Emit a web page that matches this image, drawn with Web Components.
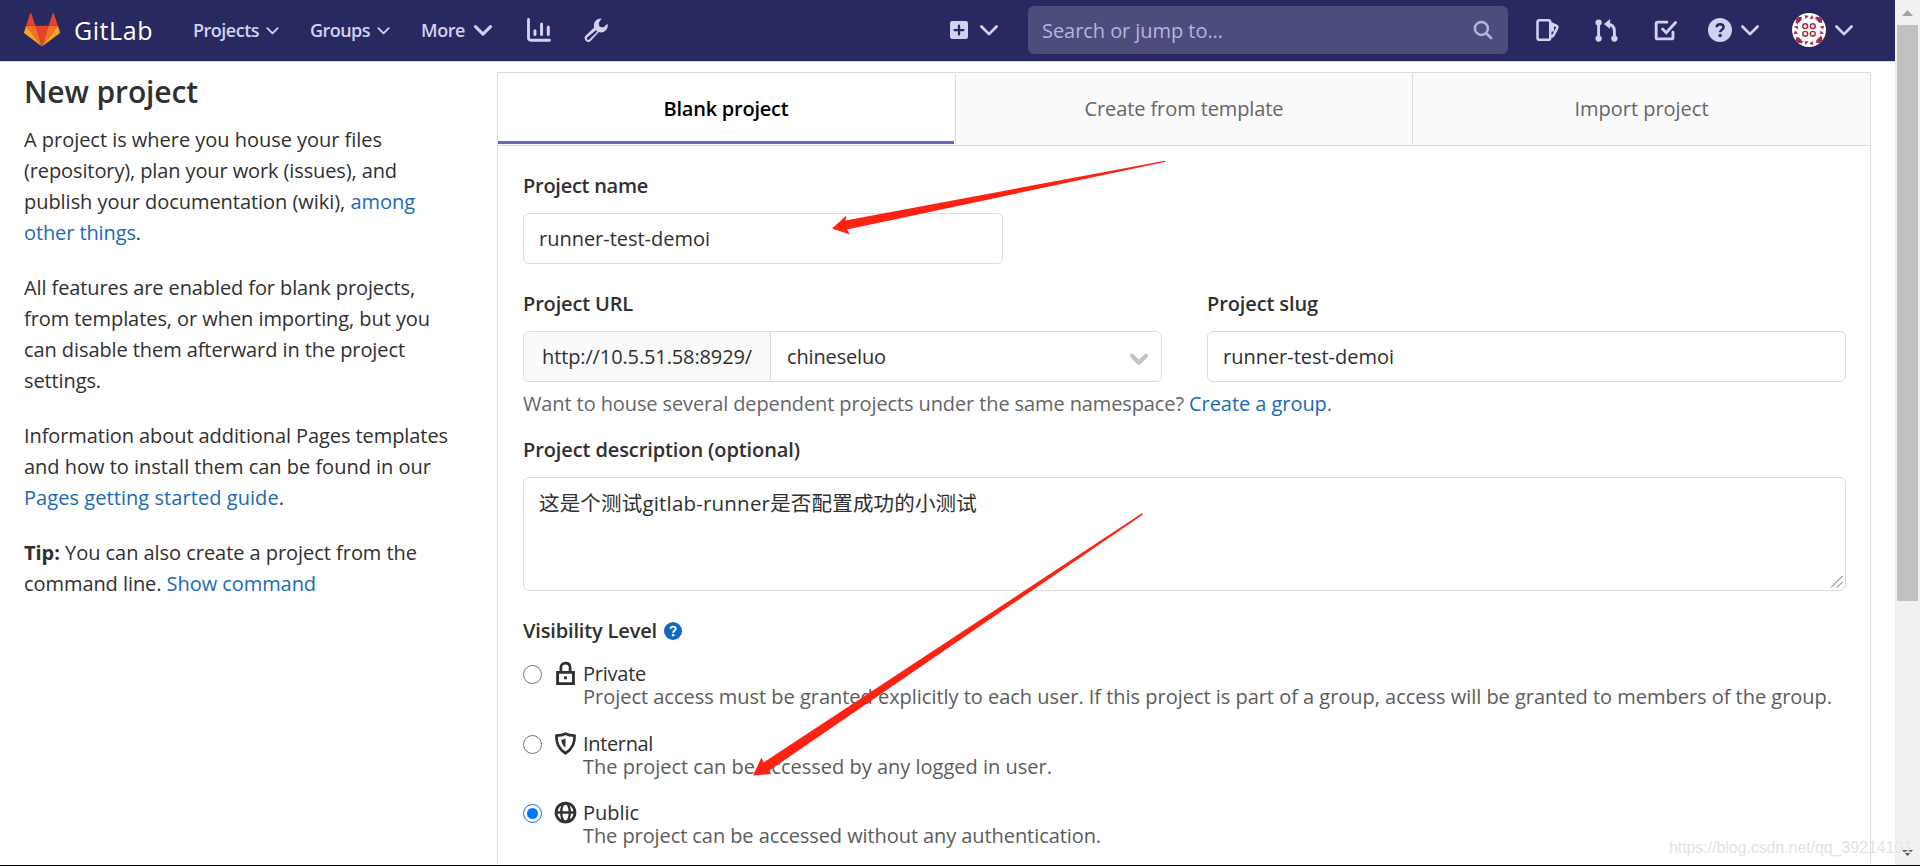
<!DOCTYPE html>
<html lang="en">
<head>
<meta charset="utf-8">
<title>New project · GitLab</title>
<style>
    body {
        margin: 0;
        height: 866px;
        overflow: hidden;
        background: #fff;
        color: #303030;
        font: 20px/31px "Open Sans", "Noto Sans", "Noto Sans CJK SC", sans-serif;
    }
</style>
</head>
<body>
<new-project-page></new-project-page>

<script>
// One line of text, tracked so that it fills exactly the given width.
class TextLine extends HTMLElement {
    constructor() {
        super();
        this.attachShadow({ mode: 'open' });
        this.shadowRoot.innerHTML = `
            <style>
                :host { display: block; white-space: nowrap; }
                span { display: inline-block; }
            </style>
            <span><slot></slot></span>
        `;
    }

    connectedCallback() {
        const target = parseFloat(this.getAttribute('width'));
        if (!target) return;
        const span = this.shadowRoot.querySelector('span');
        const count = this.textContent.trim().length;
        const natural = span.getBoundingClientRect().width;
        span.style.letterSpacing = `${(target - natural) / count}px`;
    }
}

const ICONS = {
    chevron: '<path d="M2.5 5.5 8 11l5.500-5.500" fill="none" stroke="currentColor" stroke-width="var(--stroke, 2)" style="stroke-width:var(--stroke, 2)" stroke-linecap="round" stroke-linejoin="round"/>',
    chart: '<path d="M1 1v12.200c0 1 .6 1.600 1.600 1.600H15" fill="none" stroke="currentColor" stroke-width="1.900" stroke-linecap="round"/><path d="M5.300 8.500v2.500M9.700 4v7M14.200 6v5" fill="none" stroke="currentColor" stroke-width="2" stroke-linecap="round"/>',
    wrench: '<path fill="currentColor" fill-rule="evenodd" d="M11.700.3a4.600 4.600 0 0 0-4.900 6L1.200 11.700a2.400 2.400 0 0 0 3.400 3.400l5.300-5.700a4.600 4.600 0 0 0 5.800-5.500l-2.800 2.500-2.500-.6-.6-2.500zM8 8.100l.9.9-5.400 5.400a1 1 0 0 1-1.400-1.400z"/>',
    plus: '<path fill="currentColor" fill-rule="evenodd" d="M2 0h12a2 2 0 0 1 2 2v12a2 2 0 0 1-2 2H2a2 2 0 0 1-2-2V2a2 2 0 0 1 2-2zm5 7H4a1 1 0 0 0 0 2h3v3a1 1 0 0 0 2 0V9h3a1 1 0 0 0 0-2H9V4a1 1 0 0 0-2 0z"/>',
    search: '<circle cx="6.700" cy="6.700" r="5.200" fill="none" stroke="currentColor" stroke-width="2"/><path d="m10.800 10.800 3.700 3.700" stroke="currentColor" stroke-width="2.200" stroke-linecap="round"/>',
    issues: '<path d="M2.200 1.500h6.100c.8 0 1.200.5 1.200 1.200v10.600c0 .7-.5 1.200-1.200 1.200H2.200c-.7 0-1.200-.5-1.200-1.200V2.700c0-.7.500-1.200 1.200-1.200zM9.700 3.400l3.500 1.600c1.100.5 1.300 1 .9 1.900l-2.800 5.200H9.700M11.200 4.500v4.500" fill="none" stroke="currentColor" stroke-width="1.700" stroke-linejoin="round"/>',
    merge: '<path d="M2.500 2.500v11M13.500 13.500V8.500c0-3-1.500-4.700-4.500-4.700" fill="none" stroke="currentColor" stroke-width="2"/><path d="M6.200 3.500 10.500 0v7z" fill="currentColor"/><circle cx="2.500" cy="2.500" r="2.200" fill="currentColor"/><circle cx="2.500" cy="13.600" r="2.200" fill="currentColor"/><circle cx="13.500" cy="13.600" r="2.200" fill="currentColor"/>',
    todo: '<path d="M9 2.200H2.500c-.6 0-1 .4-1 1v9.600c0 .6.400 1 1 1h9.700c.6 0 1-.4 1-1V9.200" fill="none" stroke="currentColor" stroke-width="2" stroke-linecap="round"/><path d="m6 7 2.500 2.500L15 2.500" fill="none" stroke="currentColor" stroke-width="2" stroke-linecap="round"/>',
    help: '<circle cx="8" cy="8" r="8" fill="currentColor"/><path d="M5.700 6.100A2.350 2.350 0 0 1 8 4.100c1.400 0 2.400.8 2.400 2.100 0 1.500-2.300 1.700-2.300 3.300" fill="none" style="stroke:var(--hole, #fff)" stroke-width="1.700"/><circle cx="8.100" cy="11.700" r="1.150" style="fill:var(--hole, #fff)"/>',
    lock: '<path d="M2.500 7.200h11V15h-11z" fill="none" stroke="currentColor" stroke-width="2"/><path d="M4.800 7V3.900C4.800 2 6 .8 8 .8s3.200 1.200 3.200 3.100V7" fill="none" stroke="currentColor" stroke-width="1.900"/><path d="M7 10h2v2H7z" fill="currentColor"/>',
    shield: '<path d="M8 1.200c1.800.9 3.900 1.300 6.300 1.300.3 5.500-1.800 9.500-6.300 12.300C3.500 12 1.400 8 1.700 2.500 4.100 2.500 6.200 2.100 8 1.200z" fill="none" stroke="currentColor" stroke-width="1.900" stroke-linejoin="round"/><path d="M8 4.500v6.500C6.200 9.500 5.200 7.700 5 5.400c1.200 0 2-.3 3-.9z" fill="currentColor"/>',
    earth: '<g fill="none" stroke="currentColor" stroke-width="1.900"><circle cx="8" cy="8" r="6.600"/><ellipse cx="8" cy="8" rx="3" ry="6.600" stroke-width="1.600"/><path d="M1.500 8h13" stroke-width="1.700"/></g>',
};

class UiIcon extends HTMLElement {
    constructor() {
        super();
        this.attachShadow({ mode: 'open' });
    }

    connectedCallback() {
        const size = this.getAttribute('size') || 16;
        this.shadowRoot.innerHTML = `
            <style>
                :host { display: block; flex: none; width: ${size}px; height: ${size}px; }
                svg { display: block; overflow: visible; }
            </style>
            <svg width="${size}" height="${size}" viewBox="0 0 16 16">${ICONS[this.getAttribute('name')]}</svg>
        `;
    }
}

class TanukiLogo extends HTMLElement {
    constructor() {
        super();
        this.attachShadow({ mode: 'open' });
        this.shadowRoot.innerHTML = `
            <style>
                :host, svg { display: block; }
            </style>
            <svg width="36" height="36" viewBox="0 0 36 36">
                <path fill="#e24329" d="m18 34.400 6.600-20.600H11.400z"/>
                <path fill="#fc6d26" d="M18 34.400 11.400 13.800H2.100z"/>
                <path fill="#fca326" d="M2.100 13.800.1 20c-.2.600 0 1.200.5 1.500L18 34.400z"/>
                <path fill="#e24329" d="M2.100 13.800h9.300L7.400 1.500c-.2-.7-1.100-.7-1.300 0z"/>
                <path fill="#fc6d26" d="m18 34.400 6.600-20.600h9.300z"/>
                <path fill="#fca326" d="m33.900 13.800 2 6.200c.2.600 0 1.200-.5 1.500L18 34.400z"/>
                <path fill="#e24329" d="M33.900 13.800h-9.300l4-12.300c.2-.7 1.100-.7 1.300 0z"/>
            </svg>
        `;
    }
}

class UserAvatar extends HTMLElement {
    constructor() {
        super();
        this.attachShadow({ mode: 'open' });
        // A quarter of the identicon, turned round the centre four times.
        const quarter = `
            <path d="M4 4h6v3L7 10H4zM13 2l4 1-3 3.500zM2 14l4-1v4zM3 9l3 0v3z"/>
            <circle cx="13.600" cy="13.600" r="2.500" fill="none" stroke="#a22c48" stroke-width="1.500"/>
        `;
        this.shadowRoot.innerHTML = `
            <style>
                :host { display: block; width: 34px; height: 34px; border-radius: 50%; overflow: hidden; background: #fff; }
                svg { display: block; }
            </style>
            <svg width="34" height="34" viewBox="0 0 35 35" fill="#a22c48">
                ${[0, 90, 180, 270].map((a) => `<g transform="rotate(${a} 17.500 17.500)">${quarter}</g>`).join('')}
            </svg>
        `;
    }
}

class NavBar extends HTMLElement {
    constructor() {
        super();
        this.attachShadow({ mode: 'open' });
        this.shadowRoot.innerHTML = `
            <style>
                :host {
                    --hole: #292961;
                    display: flex;
                    align-items: center;
                    height: 62px;
                    box-sizing: border-box;
                    padding: 0 40px 1px 24px;
                    background: #292961;
                    color: #d1d1f0;
                    border-bottom: 1px solid #d5d5df;
                    font-size: 18px;
                    font-weight: 600;
                }
                .brand { margin: 0 40px 0 14px; font: 400 25px/60px "Open Sans", sans-serif; color: #fff; }
                .menu { display: flex; align-items: center; gap: 6px; margin-right: 30px; }
                .menu.more { gap: 7px; margin-right: 33px; --stroke: 2.200; }
                .spacer { flex: 1; }
                .search {
                    display: flex;
                    align-items: center;
                    justify-content: space-between;
                    box-sizing: border-box;
                    width: 480px;
                    height: 48px;
                    margin: 0 28px;
                    padding: 0 15px 0 14px;
                    border-radius: 6px;
                    background: #4c4c7d;
                    color: #b5b5d9;
                    font-size: 20px;
                    font-weight: 400;
                }
                .icons { display: flex; align-items: center; }
            </style>
            <tanuki-logo></tanuki-logo>
            <text-line class="brand" width="79">GitLab</text-line>
            <div class="menu"><text-line width="66">Projects</text-line><ui-icon name="chevron" size="15"></ui-icon></div>
            <div class="menu"><text-line width="60">Groups</text-line><ui-icon name="chevron" size="15"></ui-icon></div>
            <div class="menu more"><text-line width="44">More</text-line><ui-icon name="chevron" size="22"></ui-icon></div>
            <ui-icon name="chart" size="24" style="margin-right:33px"></ui-icon>
            <ui-icon name="wrench" size="24"></ui-icon>
            <div class="spacer"></div>
            <div class="icons">
                <ui-icon name="plus" size="18" style="margin-right:10px"></ui-icon>
                <ui-icon name="chevron" size="22"></ui-icon>
            </div>
            <div class="search"><text-line width="181">Search or jump to...</text-line><ui-icon name="search" size="20"></ui-icon></div>
            <div class="icons">
                <ui-icon name="issues" size="24" style="margin-right:35px"></ui-icon>
                <ui-icon name="merge" size="23" style="margin-right:36px"></ui-icon>
                <ui-icon name="todo" size="23" style="margin-right:31px"></ui-icon>
                <ui-icon name="help" size="24" style="margin-right:7px"></ui-icon>
                <ui-icon name="chevron" size="22" style="margin-right:31px"></ui-icon>
                <user-avatar style="margin-right:7px"></user-avatar>
                <ui-icon name="chevron" size="22"></ui-icon>
            </div>
        `;
    }
}

class SideHelp extends HTMLElement {
    constructor() {
        super();
        this.attachShadow({ mode: 'open' });
        this.shadowRoot.innerHTML = `
            <style>
                :host { display: block; padding: 10px 0 0 24px; }
                h1 { margin: 0 0 12px; font-size: 30px; line-height: 40px; font-weight: 600; }
                p { margin: 0 0 24px; }
                a { color: #1b69b6; }
            </style>
            <h1><text-line width="174">New project</text-line></h1>
            <p>
                <text-line width="358">A project is where you house your files</text-line>
                <text-line width="373">(repository), plan your work (issues), and</text-line>
                <text-line width="391">publish your documentation (wiki), <a>among</a></text-line>
                <text-line width="117"><a>other things</a>.</text-line>
            </p>
            <p>
                <text-line width="391">All features are enabled for blank projects,</text-line>
                <text-line width="406">from templates, or when importing, but you</text-line>
                <text-line width="381">can disable them afterward in the project</text-line>
                <text-line width="77">settings.</text-line>
            </p>
            <p>
                <text-line width="424">Information about additional Pages templates</text-line>
                <text-line width="407">and how to install them can be found in our</text-line>
                <text-line width="260"><a>Pages getting started guide</a>.</text-line>
            </p>
            <p>
                <text-line width="393"><b>Tip:</b> You can also create a project from the</text-line>
                <text-line width="292">command line. <a>Show command</a></text-line>
            </p>
        `;
    }
}

class TabBar extends HTMLElement {
    constructor() {
        super();
        this.attachShadow({ mode: 'open' });
        this.shadowRoot.innerHTML = `
            <style>
                :host {
                    display: grid;
                    grid-template-columns: 457px 457px 1fr;
                    box-sizing: border-box;
                    height: 73px;
                    padding: 1px 0;
                    background: #fafafa;
                    border-bottom: 1px solid #dbdbdb;
                    color: #666;
                }
                div {
                    display: flex;
                    align-items: center;
                    justify-content: center;
                    padding-bottom: 2px;
                    border-left: 1px solid #dbdbdb;
                }
                .active {
                    margin-right: 1px;
                    padding: 1px 0 0;
                    border-left: 0;
                    border-bottom: 3px solid #6666c4;
                    border-radius: 3px 3px 0 0;
                    background: #fff;
                    color: #000;
                    font-weight: 600;
                }
            </style>
            <div class="active"><text-line width="125">Blank project</text-line></div>
            <div><text-line width="199">Create from template</text-line></div>
            <div><text-line width="134">Import project</text-line></div>
        `;
    }
}

class FormField extends HTMLElement {
    constructor() {
        super();
        this.attachShadow({ mode: 'open' });
        this.shadowRoot.innerHTML = `
            <style>
                :host { display: block; }
                .label { height: 31px; margin-bottom: 12px; font-weight: 600; }
                .box {
                    display: flex;
                    box-sizing: border-box;
                    height: var(--box-height, 51px);
                    border: 1px solid #dbdbdb;
                    border-radius: 6px;
                    line-height: 49px;
                    overflow: hidden;
                    background: #fff;
                }
            </style>
            <div class="label"><slot name="label"></slot></div>
            <div class="box"><slot></slot></div>
        `;
    }
}

class VisibilityOption extends HTMLElement {
    constructor() {
        super();
        this.attachShadow({ mode: 'open' });
    }

    connectedCallback() {
        const checked = this.hasAttribute('checked');
        const color = checked ? '#0075ff' : '#767676';
        this.shadowRoot.innerHTML = `
            <style>
                :host { display: grid; grid-template-columns: 31px 29px 1fr; height: 69.500px; align-content: start; }
                .radio {
                    display: grid;
                    place-items: center;
                    box-sizing: border-box;
                    width: 19px;
                    height: 19px;
                    margin-top: 3px;
                    border: 1.500px solid ${color};
                    border-radius: 50%;
                }
                .radio i { width: 11px; height: 11px; border-radius: 50%; background: ${checked ? color : 'none'}; }
                .name, .text { grid-column: 3; line-height: 24px; }
                .name { grid-row: 1; }
                .text { margin-top: -1px; color: #5c5c5c; }
            </style>
            <div class="radio"><i></i></div>
            <ui-icon name="${this.getAttribute('icon')}" size="23"></ui-icon>
            <div class="name"><slot name="name"></slot></div>
            <div class="text"><slot></slot></div>
        `;
    }
}

class ProjectForm extends HTMLElement {
    constructor() {
        super();
        this.attachShadow({ mode: 'open' });
        this.shadowRoot.innerHTML = `
            <style>
                :host { display: block; padding: 24px 24px 0 25px; }
                .name { width: 480px; }
                .row { display: grid; grid-template-columns: 639px 639px; gap: 45px; margin-top: 24px; }
                .value { padding-left: 15px; }
                .prefix { box-sizing: border-box; width: 247px; padding-left: 18px; background: #fafafa; border-right: 1px solid #dbdbdb; }
                .select { flex: 1; display: flex; align-items: center; justify-content: space-between; padding: 0 12px 0 16px; }
                .select ui-icon { --stroke: 3.400; color: #c4c4c4; margin-top: 4px; }
                .hint { display: flex; gap: 5px; margin-top: 6px; color: #666; }
                a { color: #1b69b6; }
                .description { margin-top: 15px; --box-height: 114px; }
                .area { flex: 1; display: flex; justify-content: space-between; padding: 1px 1px 1px 15px; font-size: 20.500px; }
                .area svg { align-self: flex-end; }
                .visibility { display: flex; align-items: center; gap: 7px; margin: 24px 0 16px; font-weight: 600; }
                .visibility ui-icon { color: #1068bf; }
            </style>
            <form-field class="name">
                <text-line slot="label" width="125">Project name</text-line>
                <text-line class="value" width="171">runner-test-demoi</text-line>
            </form-field>
            <div class="row">
                <form-field>
                    <text-line slot="label" width="110">Project URL</text-line>
                    <div class="prefix"><text-line width="210">http://10.5.51.58:8929/</text-line></div>
                    <div class="select"><text-line width="99">chineseluo</text-line><ui-icon name="chevron" size="20"></ui-icon></div>
                </form-field>
                <form-field>
                    <text-line slot="label" width="111">Project slug</text-line>
                    <text-line class="value" width="171">runner-test-demoi</text-line>
                </form-field>
            </div>
            <div class="hint">
                <text-line width="661">Want to house several dependent projects under the same namespace?</text-line>
                <a><text-line width="143">Create a group.</text-line></a>
            </div>
            <form-field class="description">
                <text-line slot="label" width="277">Project description (optional)</text-line>
                <div class="area">
                    <text-line width="438">这是个测试gitlab-runner是否配置成功的小测试</text-line>
                    <svg width="15" height="15" viewBox="0 0 15 15"><path d="M2 13.500 13.500 2M8 13.500 13.500 8" stroke="#555" stroke-width=".9"/></svg>
                </div>
            </form-field>
            <div class="visibility">
                <text-line width="134">Visibility Level</text-line>
                <ui-icon name="help" size="18"></ui-icon>
            </div>
            <visibility-option icon="lock">
                <text-line slot="name" width="63">Private</text-line>
                <text-line width="1249">Project access must be granted explicitly to each user. If this project is part of a group, access will be granted to members of the group.</text-line>
            </visibility-option>
            <visibility-option icon="shield">
                <text-line slot="name" width="70">Internal</text-line>
                <text-line width="469">The project can be accessed by any logged in user.</text-line>
            </visibility-option>
            <visibility-option icon="earth" checked>
                <text-line slot="name" width="56">Public</text-line>
                <text-line width="518">The project can be accessed without any authentication.</text-line>
            </visibility-option>
        `;
    }
}

class ScrollRail extends HTMLElement {
    constructor() {
        super();
        this.attachShadow({ mode: 'open' });
        this.shadowRoot.innerHTML = `
            <style>
                :host { display: flex; flex-direction: column; width: 25px; height: 866px; background: #f1f1f1; }
                .up { height: 25px; }
                .thumb { width: 21px; height: 576px; margin: 0 2px; background: #c1c1c1; }
                .down { margin-top: auto; height: 25px; }
                svg { display: block; }
            </style>
            <svg class="up" width="25" height="25"><path d="m7 16 5.500-6 5.500 6z" fill="#a3a3a3"/></svg>
            <div class="thumb"></div>
            <svg class="down" width="25" height="25"><path d="m7 9 5.500 6L18 9z" fill="#505050"/></svg>
        `;
    }
}

// Red pointer arrows and the watermark, drawn over the form.
class PageMarks extends HTMLElement {
    constructor() {
        super();
        this.attachShadow({ mode: 'open' });
        this.shadowRoot.innerHTML = `
            <style>
                :host { position: absolute; inset: 0; pointer-events: none; }
                svg { display: block; }
                .watermark {
                    position: absolute;
                    right: 8px;
                    bottom: 8px;
                    color: #e3e3e3;
                    font: 16px/20px "Liberation Sans", Arial, sans-serif;
                    text-shadow: 0 0 1px #fff;
                }
                .edge { position: absolute; left: 0; right: 0; bottom: 0; height: 1px; background: #000; }
            </style>
            <svg width="1920" height="865" fill="#ff2213">
                <path d="M832 228.500 846.500 215.500 845.500 220.500 1165 160.700 1166 161.700 847 229.500 850 234.500z"/>
                <path d="M753 775.500 761.500 757.500 763.500 762.500 1142 513.300 1143 514.500 768.500 771 771.500 774z"/>
            </svg>
            <text-line class="watermark" width="243">https://blog.csdn.net/qq_39214101</text-line>
            <div class="edge"></div>
        `;
    }
}

class NewProjectPage extends HTMLElement {
    constructor() {
        super();
        this.attachShadow({ mode: 'open' });
        this.shadowRoot.innerHTML = `
            <style>
                :host { display: flex; position: relative; height: 866px; overflow: hidden; }
                .page { width: 1895px; }
                .columns { display: grid; grid-template-columns: 497px 1374px; }
                .panel { margin-top: 10px; height: 900px; box-sizing: border-box; border: 1px solid #dbdbdb; }
            </style>
            <div class="page">
                <nav-bar></nav-bar>
                <div class="columns">
                    <side-help></side-help>
                    <div class="panel">
                        <tab-bar></tab-bar>
                        <project-form></project-form>
                    </div>
                </div>
            </div>
            <scroll-rail></scroll-rail>
            <page-marks></page-marks>
        `;
    }
}

customElements.define('text-line', TextLine);
customElements.define('ui-icon', UiIcon);
customElements.define('tanuki-logo', TanukiLogo);
customElements.define('user-avatar', UserAvatar);
customElements.define('nav-bar', NavBar);
customElements.define('side-help', SideHelp);
customElements.define('tab-bar', TabBar);
customElements.define('form-field', FormField);
customElements.define('visibility-option', VisibilityOption);
customElements.define('project-form', ProjectForm);
customElements.define('scroll-rail', ScrollRail);
customElements.define('page-marks', PageMarks);
customElements.define('new-project-page', NewProjectPage);
</script>
</body>
</html>
